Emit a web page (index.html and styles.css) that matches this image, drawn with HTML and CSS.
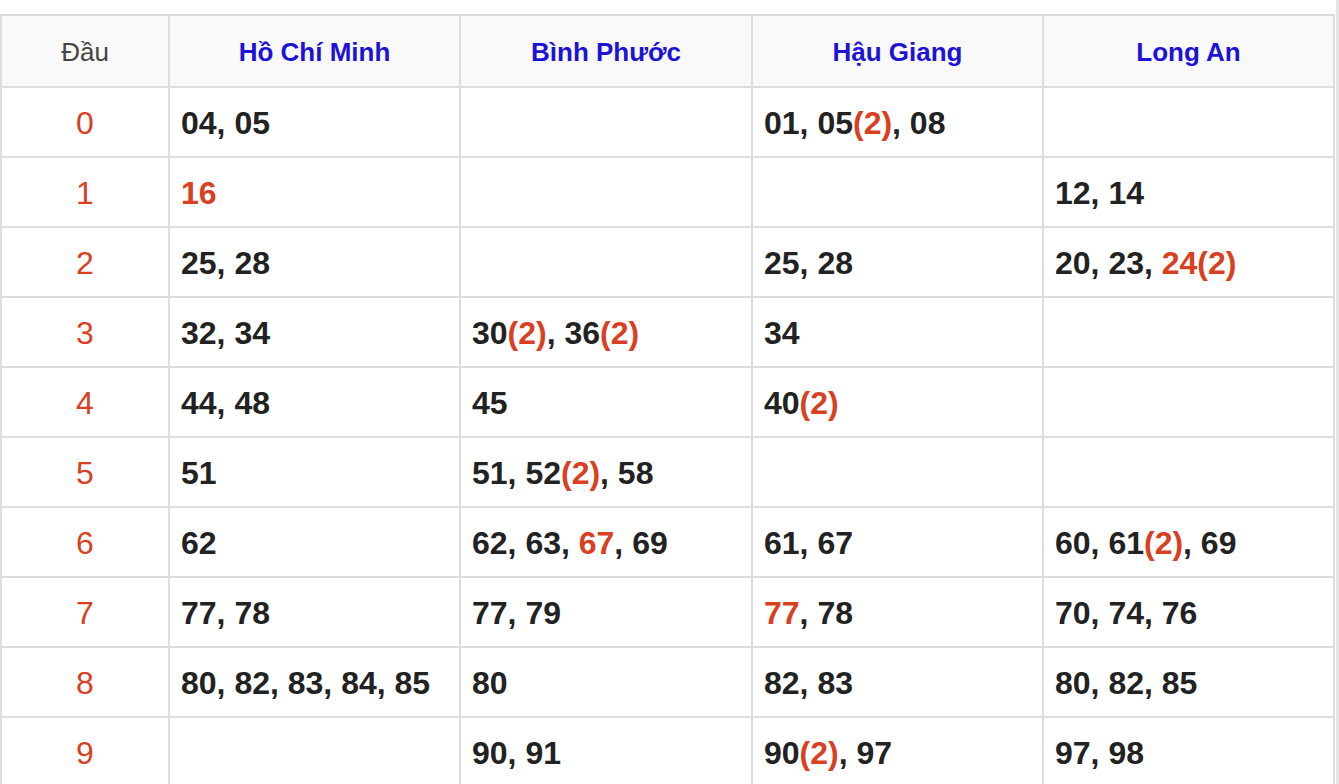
FILE: index.html
```html
<!DOCTYPE html>
<html lang="vi">
<head>
<meta charset="utf-8">
<title>Lô tô theo đầu</title>
<link rel="stylesheet" href="styles.css">
</head>
<body>
<div class="board">
  <div class="cell head first">Đầu</div>
  <div class="cell head">Hồ Chí Minh</div>
  <div class="cell head">Bình Phước</div>
  <div class="cell head">Hậu Giang</div>
  <div class="cell head">Long An</div>

  <div class="cell first">0</div>
  <div class="cell">04, 05</div>
  <div class="cell"></div>
  <div class="cell">01, 05<span class="hl">(2)</span>, 08</div>
  <div class="cell"></div>

  <div class="cell first">1</div>
  <div class="cell"><span class="hl">16</span></div>
  <div class="cell"></div>
  <div class="cell"></div>
  <div class="cell">12, 14</div>

  <div class="cell first">2</div>
  <div class="cell">25, 28</div>
  <div class="cell"></div>
  <div class="cell">25, 28</div>
  <div class="cell">20, 23, <span class="hl">24(2)</span></div>

  <div class="cell first">3</div>
  <div class="cell">32, 34</div>
  <div class="cell">30<span class="hl">(2)</span>, 36<span class="hl">(2)</span></div>
  <div class="cell">34</div>
  <div class="cell"></div>

  <div class="cell first">4</div>
  <div class="cell">44, 48</div>
  <div class="cell">45</div>
  <div class="cell">40<span class="hl">(2)</span></div>
  <div class="cell"></div>

  <div class="cell first">5</div>
  <div class="cell">51</div>
  <div class="cell">51, 52<span class="hl">(2)</span>, 58</div>
  <div class="cell"></div>
  <div class="cell"></div>

  <div class="cell first">6</div>
  <div class="cell">62</div>
  <div class="cell">62, 63, <span class="hl">67</span>, 69</div>
  <div class="cell">61, 67</div>
  <div class="cell">60, 61<span class="hl">(2)</span>, 69</div>

  <div class="cell first">7</div>
  <div class="cell">77, 78</div>
  <div class="cell">77, 79</div>
  <div class="cell"><span class="hl">77</span>, 78</div>
  <div class="cell">70, 74, 76</div>

  <div class="cell first">8</div>
  <div class="cell">80, 82, 83, 84, 85</div>
  <div class="cell">80</div>
  <div class="cell">82, 83</div>
  <div class="cell">80, 82, 85</div>

  <div class="cell first">9</div>
  <div class="cell"></div>
  <div class="cell">90, 91</div>
  <div class="cell">90<span class="hl">(2)</span>, 97</div>
  <div class="cell">97, 98</div>
</div>
<div class="edge"></div>
</body>
</html>
```

FILE: styles.css
```css
html, body {
  margin: 0;
  padding: 0;
  background: #ffffff;
  overflow: hidden;
}

body {
  font-family: "Liberation Sans", Arial, Helvetica, sans-serif;
  padding-top: 14px;
}

.board {
  display: grid;
  grid-template-columns: 168px 291px 292px 291px 291px;
  grid-template-rows: 72px;
  grid-auto-rows: 70px;
  width: 1335px;
  box-sizing: border-box;
  border-top: 2px solid #dddddd;
  border-left: 2px solid #dddddd;
}

.cell {
  box-sizing: border-box;
  border-right: 2px solid #dddddd;
  border-bottom: 2px solid #dddddd;
  padding: 2px 10px 0 11px;
  line-height: 66px;
  font-size: 32px;
  font-weight: bold;
  color: #222222;
  white-space: nowrap;
}

.cell.head {
  background: #f9f9f9;
  text-align: center;
  font-size: 26px;
  line-height: 68px;
  color: #1d13d6;
  padding: 2px 0 0 0;
}

.cell.head.first {
  color: #444444;
  font-weight: normal;
}

.cell.first {
  text-align: center;
  font-weight: normal;
  color: #d9401f;
  padding-left: 0;
  padding-right: 0;
}

.hl {
  color: #d9401f;
}

.edge {
  position: fixed;
  top: 0;
  right: 0;
  width: 3px;
  height: 100%;
  background: #e6e6e6;
}
```
